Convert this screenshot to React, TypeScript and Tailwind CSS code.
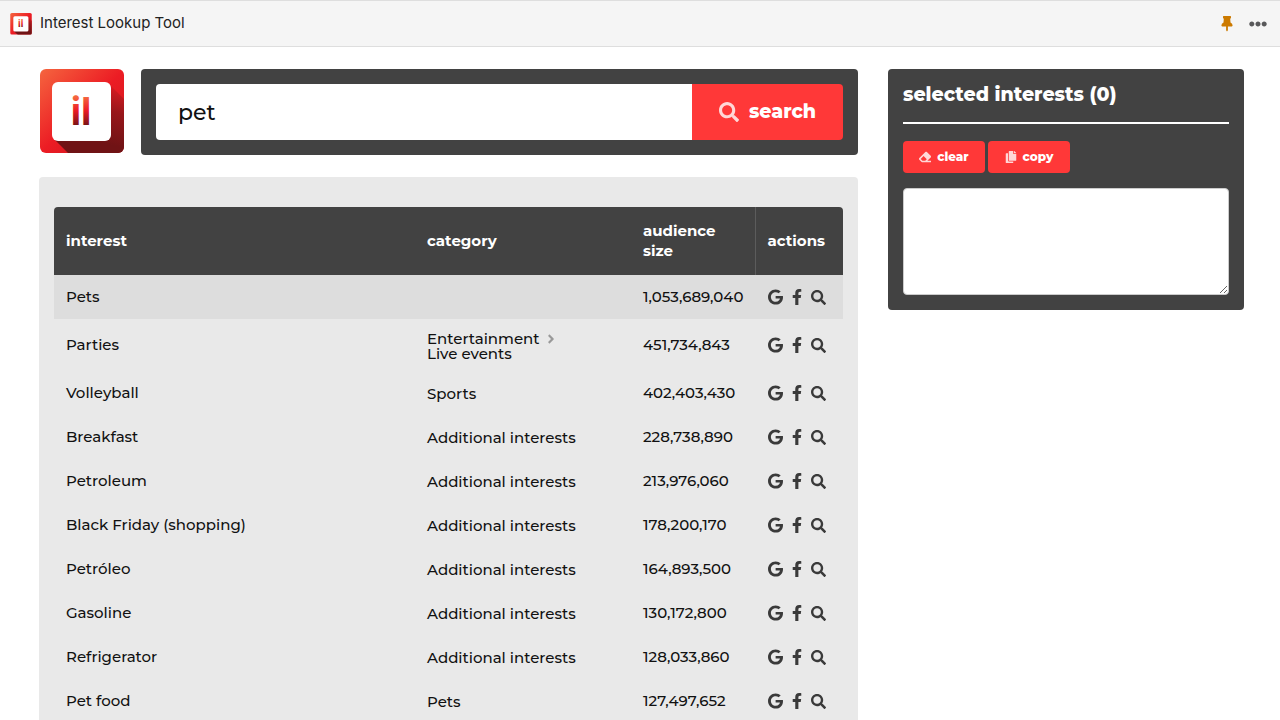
import React, { useState } from 'react';
import { FaAngleRight, FaCopy, FaEllipsisH, FaEraser, FaFacebookF, FaGoogle, FaSearch } from 'react-icons/fa';

interface Interest {
  name: string;
  category: string[];
  size: string;
}

const interests: Interest[] = [
  { name: 'Pets', category: [], size: '1,053,689,040' },
  { name: 'Parties', category: ['Entertainment', 'Live events'], size: '451,734,843' },
  { name: 'Volleyball', category: ['Sports'], size: '402,403,430' },
  { name: 'Breakfast', category: ['Additional interests'], size: '228,738,890' },
  { name: 'Petroleum', category: ['Additional interests'], size: '213,976,060' },
  { name: 'Black Friday (shopping)', category: ['Additional interests'], size: '178,200,170' },
  { name: 'Petróleo', category: ['Additional interests'], size: '164,893,500' },
  { name: 'Gasoline', category: ['Additional interests'], size: '130,172,800' },
  { name: 'Refrigerator', category: ['Additional interests'], size: '128,033,860' },
  { name: 'Pet food', category: ['Pets'], size: '127,497,652' },
];

const Logo: React.FC<{ id: string; className: string }> = ({ id, className }) => (
  <svg viewBox="0 0 86 86" className={className} role="img" aria-label="Interest Lookup Tool logo">
    <defs>
      <linearGradient id={`${id}-bg`} x1="0" y1="0" x2="1" y2="1">
        <stop offset="0" stopColor="#f5663f" />
        <stop offset="0.5" stopColor="#ec1c24" />
        <stop offset="1" stopColor="#c4161c" />
      </linearGradient>
      <linearGradient id={`${id}-shade`} gradientUnits="userSpaceOnUse" x1="72" y1="8" x2="56" y2="72">
        <stop offset="0" stopColor="#ec1c24" />
        <stop offset="0.5" stopColor="#98161a" />
        <stop offset="1" stopColor="#701315" />
      </linearGradient>
      <linearGradient id={`${id}-ink`} gradientUnits="userSpaceOnUse" x1="0" y1="28" x2="0" y2="58">
        <stop offset="0" stopColor="#f5663f" />
        <stop offset="0.45" stopColor="#ec1c24" />
        <stop offset="1" stopColor="#6b1214" />
      </linearGradient>
      <clipPath id={`${id}-clip`}>
        <rect x="1" y="0" width="84" height="84" rx="6" />
      </clipPath>
    </defs>
    <g clipPath={`url(#${id}-clip)`}>
      <rect width="86" height="86" fill={`url(#${id}-bg)`} />
      <path d="M15 70 L70 15 L86 31 V86 H31 Z" fill={`url(#${id}-shade)`} />
    </g>
    <rect x="13" y="13" width="59" height="59" rx="6" fill="#fff" />
    <text
      x="42"
      y="56"
      textAnchor="middle"
      fontFamily="Inter, sans-serif"
      fontWeight="700"
      fontSize="38"
      fill={`url(#${id}-ink)`}
    >
      il
    </text>
  </svg>
);

const PinIcon: React.FC<{ className: string }> = ({ className }) => (
  <svg viewBox="0 0 12 16" className={className} fill="currentColor" aria-hidden="true">
    <path d="M2 .6Q2 0 2.6 0H9.4Q10 0 10 .6V1.8Q10 2.3 9.2 2.8L9.5 6.6Q11.6 7.8 11.6 9.6Q11.6 10.4 10.8 10.4H6.9V14.2L6 15.6L5.1 14.2V10.4H1.2Q.4 10.4 .4 9.6Q.4 7.8 2.5 6.6L2.8 2.8Q2 2.3 2 1.8Z" />
  </svg>
);

const App: React.FC = () => {
  const [query, setQuery] = useState('pet');
  const [selected, setSelected] = useState('');

  return (
    <div className="h-screen overflow-hidden bg-white font-[Montserrat,Inter,sans-serif] text-[#111]">
      {/* top bar */}
      <header className="flex h-[47px] items-center justify-between border-y border-[#dedede] bg-[#f5f5f5] pr-[13px] pl-2.5">
        <div className="flex items-center gap-2">
          <Logo id="small" className="h-[22px] w-[22px]" />
          <span className="font-[Inter,sans-serif] text-[15px] text-[#222]">Interest Lookup Tool</span>
        </div>
        <div className="flex items-center gap-4">
          <button type="button" aria-label="Pin">
            <PinIcon className="h-4 w-3 text-[#cc7a00]" />
          </button>
          <button type="button" aria-label="More">
            <FaEllipsisH className="h-[18px] w-[18px] text-[#58585a]" />
          </button>
        </div>
      </header>

      <div className="grid grid-cols-[1fr_356px] items-start gap-[30px] pt-[22px] pr-9 pl-[39px]">
        <main>
          {/* search */}
          <div className="flex gap-4">
            <Logo id="large" className="h-[86px] w-[86px] shrink-0" />
            <form
              className="flex h-[86px] flex-1 rounded bg-[#424242] p-[15px]"
              onSubmit={(e) => e.preventDefault()}
            >
              <input
                type="text"
                aria-label="Search interests"
                value={query}
                onChange={(e) => setQuery(e.target.value)}
                className="min-w-0 flex-1 rounded-l bg-white px-[22px] text-[22px] font-medium outline-none"
              />
              <button
                type="submit"
                className="flex w-[151px] items-center justify-center gap-2.5 rounded-r bg-[#ff3838] text-[19px] font-extrabold text-white"
              >
                <FaSearch className="h-5 w-5 opacity-80" />
                search
              </button>
            </form>
          </div>

          {/* results */}
          <div className="mt-[22px] rounded bg-[#e9e9e9] px-[15px] pt-[30px] pb-[15px]">
            <table className="w-full table-fixed text-left text-[15px] font-medium">
              <thead>
                <tr className="h-[68px] text-white">
                  <th className="rounded-tl bg-[#424242] px-3 font-bold">interest</th>
                  <th className="w-[216px] bg-[#424242] px-3 font-bold">category</th>
                  <th className="w-[124px] bg-[#424242] px-3 leading-5 font-bold">
                    audience
                    <br />
                    size
                  </th>
                  <th className="w-[88px] rounded-tr border-l border-[#5c5c5c] bg-[#424242] px-3 font-bold">
                    actions
                  </th>
                </tr>
              </thead>
              <tbody>
                {interests.map((item, index) => (
                  <tr
                    key={item.name}
                    className={`${index === 0 ? 'bg-[#dddddd]' : ''} ${item.category.length > 1 ? 'h-[52px]' : 'h-11'}`}
                  >
                    <td className="px-3">{item.name}</td>
                    <td className="px-3 pt-px leading-[15px]">
                      {item.category.map((part, i) => (
                        <span key={part} className="block">
                          {part}
                          {i < item.category.length - 1 && (
                            <FaAngleRight className="ml-1.5 inline h-3.5 w-2.5 align-[-2px] text-[#999]" />
                          )}
                        </span>
                      ))}
                    </td>
                    <td className="px-3 whitespace-nowrap">{item.size}</td>
                    <td className="pl-[13px]">
                      <div className="flex items-center gap-[9px] text-[#3a3a3a]">
                        <a href="#google" aria-label={`Google ${item.name}`}>
                          <FaGoogle className="h-4 w-[15px]" />
                        </a>
                        <a href="#facebook" aria-label={`Facebook ${item.name}`}>
                          <FaFacebookF className="h-4 w-2.5" />
                        </a>
                        <a href="#search" aria-label={`Search ${item.name}`}>
                          <FaSearch className="h-[15px] w-[15px]" />
                        </a>
                      </div>
                    </td>
                  </tr>
                ))}
              </tbody>
            </table>
          </div>
        </main>

        {/* selected interests */}
        <aside className="rounded bg-[#424242] p-[15px] text-white">
          <h2
            id="selected-title"
            className="border-b-2 border-white pb-4 text-[19px] leading-[22px] font-extrabold"
          >
            selected interests (0)
          </h2>
          <div className="mt-[17px] flex gap-[3px]">
            <button
              type="button"
              onClick={() => setSelected('')}
              className="flex h-8 w-[82px] items-center justify-center gap-1.5 rounded bg-[#ff3838] text-xs font-extrabold"
            >
              <FaEraser className="h-3 w-3 opacity-80" />
              clear
            </button>
            <button
              type="button"
              className="flex h-8 w-[82px] items-center justify-center gap-1.5 rounded bg-[#ff3838] text-xs font-extrabold"
            >
              <FaCopy className="h-3 w-3 opacity-80" />
              copy
            </button>
          </div>
          <textarea
            aria-labelledby="selected-title"
            value={selected}
            onChange={(e) => setSelected(e.target.value)}
            className="mt-[15px] block h-[107px] w-full resize rounded border border-[#ccc] bg-white p-2 text-[15px] text-[#111] outline-none"
          />
        </aside>
      </div>
    </div>
  );
};

export default App;
